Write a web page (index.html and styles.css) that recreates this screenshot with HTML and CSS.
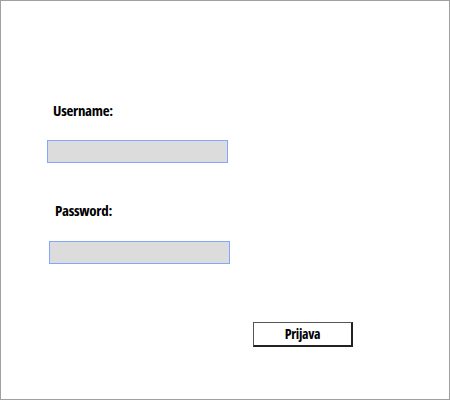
FILE: index.html
```html
<!DOCTYPE html>
<html>
<head>
<meta charset="utf-8">
<link rel="stylesheet" href="styles.css">
</head>
<body>
<div class="frame">
  <form class="login">
    <label class="label label-user">Username:</label>
    <input class="field field-user" type="text">
    <label class="label label-pass">Password:</label>
    <input class="field field-pass" type="text">
    <button class="btn" type="button">Prijava</button>
  </form>
</div>
</body>
</html>
```
FILE: styles.css
```css
html, body {
  margin: 0;
  padding: 0;
  background: #ffffff;
}
.frame {
  width: 450px;
  height: 400px;
  box-sizing: border-box;
  border: 1px solid #a0a0a0;
}
.login {
  display: flex;
  flex-direction: column;
  align-items: flex-start;
  margin: 0;
  padding-top: 99px;
}
.label {
  font-family: "Open Sans", "Liberation Sans Narrow", sans-serif;
  font-weight: 700;
  font-stretch: 75%;
  font-size: 15px;
  line-height: 20px;
  letter-spacing: -0.3px;
  color: #000;
}
.label-user { margin-left: 52px; }
.label-pass { margin-left: 54px; }
.field {
  -webkit-appearance: none;
  appearance: none;
  box-sizing: border-box;
  width: 181px;
  height: 23px;
  margin: 0;
  padding: 0;
  border: none;
  border-radius: 0;
  box-shadow: inset 0 0 0 1px #84a6ff;
  background: #dcdcdc;
  outline: none;
}
.field-user {
  margin-left: 46px;
  margin-top: 20px;
  margin-bottom: 37px;
}
.field-pass {
  margin-left: 48px;
  margin-top: 21px;
}
.btn {
  box-sizing: border-box;
  width: 100px;
  height: 25px;
  margin-left: 252px;
  margin-top: 58px;
  padding: 0;
  background: #ffffff;
  border-style: solid;
  border-width: 1px 2px 2px 1px;
  border-color: #555 #222 #222 #555;
  font-family: "Open Sans", "Liberation Sans Narrow", sans-serif;
  font-weight: 700;
  font-stretch: 75%;
  font-size: 14px;
  line-height: 20px;
  letter-spacing: -0.3px;
  color: #000;
}
```
